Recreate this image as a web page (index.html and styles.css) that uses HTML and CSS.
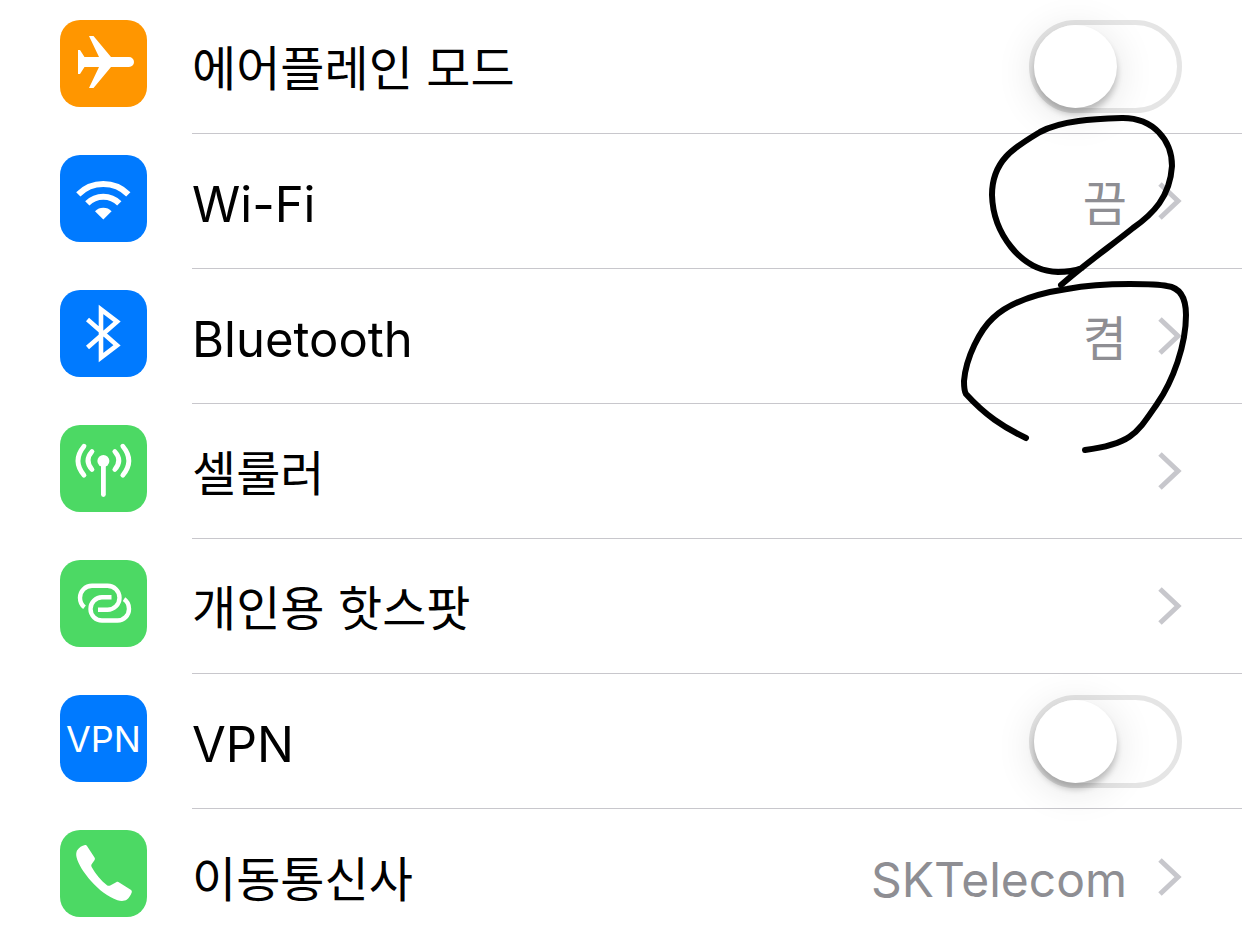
FILE: index.html
```html
<!DOCTYPE html>
<html lang="ko">
<head>
    <meta charset="UTF-8">
    <meta name="viewport" content="width=device-width, initial-scale=1.0">
    <title>설정</title>
    <link rel="stylesheet" href="styles.css">
</head>
<body>
    <main class="settings">
        <ul class="list">
            <li class="row">
                <svg class="icon orange" viewBox="0 0 87 87" aria-hidden="true">
                    <path fill="#fff" d="M18 30h2l4.500 7H39L29 16h4.500L51 37h18a5 5 0 0 1 0 10H51L33.500 68H29l10-21H24.500L20 54h-2z"/>
                </svg>
                <div class="content">
                    <label class="label" for="airplane">에어플레인 모드</label>
                    <input class="switch" type="checkbox" id="airplane">
                </div>
            </li>
            <li class="row">
                <svg class="icon blue" viewBox="0 0 87 87" aria-hidden="true">
                    <g fill="none" stroke="#fff" stroke-width="6">
                        <path d="M18.300 39.300a35.400 35.400 0 0 1 50 0"/>
                        <path d="M27.300 48.400a22.500 22.500 0 0 1 32 0"/>
                    </g>
                    <path fill="#fff" d="M43.300 64.500L35 56.200a11.700 11.700 0 0 1 16.600 0z"/>
                </svg>
                <a class="content" href="#wifi">
                    <span class="label latin">Wi-Fi</span>
                    <span class="value">끔</span>
                    <svg class="chevron" viewBox="0 0 24 38" aria-hidden="true"><path d="M2 2l18 17L2 36"/></svg>
                </a>
            </li>
            <li class="row">
                <svg class="icon blue" viewBox="0 0 87 87" aria-hidden="true">
                    <path fill="none" stroke="#fff" stroke-width="4.600" d="M27.500 29.500L57 55.300 41 67.500v-48l16 12.200-29.500 25.800"/>
                </svg>
                <a class="content" href="#bluetooth">
                    <span class="label latin">Bluetooth</span>
                    <span class="value">켬</span>
                    <svg class="chevron" viewBox="0 0 24 38" aria-hidden="true"><path d="M2 2l18 17L2 36"/></svg>
                </a>
            </li>
            <li class="row">
                <svg class="icon green" viewBox="0 0 87 87" aria-hidden="true">
                    <circle cx="43.400" cy="36" r="6" fill="#fff"/>
                    <g fill="none" stroke="#fff" stroke-width="4.800" stroke-linecap="round">
                        <path d="M43.400 36v33.500"/>
                        <path d="M32 26.500q-8 9 0 18M54.800 26.500q8 9 0 18"/>
                        <path d="M24 21.200q-12 14.500 0 29M62.800 21.200q12 14.500 0 29"/>
                    </g>
                </svg>
                <a class="content" href="#cellular">
                    <span class="label">셀룰러</span>
                    <svg class="chevron" viewBox="0 0 24 38" aria-hidden="true"><path d="M2 2l18 17L2 36"/></svg>
                </a>
            </li>
            <li class="row">
                <svg class="icon green" viewBox="0 0 87 87" aria-hidden="true">
                    <g fill="none" stroke="#fff" stroke-width="4.400">
                        <path d="M24.500 47.300C21.500 45 20 41.500 20 37.700a12 12 0 0 1 12-12h15.500a12 12 0 0 1 0 24H38"/>
                        <path d="M51.500 37.300H42.500a11.500 11.500 0 0 0-12 11.700 11.500 11.500 0 0 0 12 11.500h15a11.500 11.500 0 0 0 11.500-11.500c0-4-1.500-7.500-5-9.800"/>
                    </g>
                </svg>
                <a class="content" href="#hotspot">
                    <span class="label">개인용 핫스팟</span>
                    <svg class="chevron" viewBox="0 0 24 38" aria-hidden="true"><path d="M2 2l18 17L2 36"/></svg>
                </a>
            </li>
            <li class="row">
                <span class="icon blue vpn" aria-hidden="true">VPN</span>
                <div class="content">
                    <label class="label latin" for="vpn">VPN</label>
                    <input class="switch" type="checkbox" id="vpn">
                </div>
            </li>
            <li class="row">
                <svg class="icon green" viewBox="0 0 87 87" aria-hidden="true">
                    <path fill="#fff" d="M17 20.500c2-3 5-5 8-5.500 1 0 1.500.300 2 1l7.500 11.500c.700 1 .500 2-.200 3l-2.500 3.500c-.700 1-.700 2 0 3.200C35.500 44 41 50.500 47 55.200c1 .800 2 .800 3.200.200l6-3.200c1-.500 2-.500 3 .200l11.500 7.300c1 .700 1.400 1.600 1 2.800-1.200 3-2.700 5.500-4.700 7-2.500 1.700-6 1.800-9.500.700C48 67 39 60 31 51c-7-8-13-17-14.500-24-.500-2.500-.300-4.800.500-6.500z"/>
                </svg>
                <a class="content" href="#carrier">
                    <span class="label">이동통신사</span>
                    <span class="value">SKTelecom</span>
                    <svg class="chevron" viewBox="0 0 24 38" aria-hidden="true"><path d="M2 2l18 17L2 36"/></svg>
                </a>
            </li>
        </ul>

        <!-- 손글씨 표시 -->
        <svg class="marks" viewBox="942 100 300 360" aria-hidden="true">
            <path d="M1082 268C1074 271 1066 272 1058 272C1020 271 993 232 992 195C992 160 1015 147 1040 132C1062 120 1095 119 1123 118C1153 118 1172 140 1172 166C1170 197 1153 214 1133 228C1112 245 1085 264 1061 285"/>
            <path d="M1026 438C1003 427 985 415 966 394C964 391 964 386 964 381C966 357 980 330 993 318C1010 302 1040 293 1067 289C1088 285 1109 284 1130 284C1143 284 1158 284 1167 286C1183 288 1186 302 1186 315C1186 345 1173 381 1157 404C1137 433 1132 444 1085 450"/>
        </svg>
    </main>
</body>
</html>
```
FILE: styles.css
```css
body {
    margin: 0;
    background: #fff;
    color: #000;
    font-family: Inter, 'Noto Sans CJK KR', sans-serif;
    font-size: 48px;
    line-height: 72px;
}
.settings {
    position: relative;
}
.list {
    list-style: none;
    margin: 0;
    padding: 0;
}
.row {
    display: flex;
    align-items: flex-start;
    gap: 45px;
    min-height: 135px;
    padding-left: 60px;
}
.row:first-child {
    min-height: 134px;
}
.row:first-child .icon {
    margin-top: 20px;
}
.row:last-child {
    min-height: 128px;
}
.row:last-child .content {
    border-bottom: none;
    padding-top: 8px;
}
.icon {
    flex: none;
    width: 87px;
    height: 87px;
    margin-top: 21px;
    border-radius: 20px;
}
.orange {
    background: #ff9600;
}
.blue {
    background: #007aff;
}
.green {
    background: #4cd964;
}
.vpn {
    display: flex;
    align-items: center;
    justify-content: center;
    color: #fff;
    font-size: 36px;
    font-weight: 400;
}
.content {
    flex: 1;
    align-self: stretch;
    display: flex;
    align-items: center;
    padding-right: 60px;
    border-bottom: 1px solid #c8c7cc;
    color: inherit;
    text-decoration: none;
}
.label {
    flex: 1;
    padding-top: 5px;
}
.value {
    padding-top: 5px;
    color: #8e8e93;
}
.latin {
    padding-top: 7px;
    font-size: 49px;
}
.chevron {
    flex: none;
    width: 24px;
    height: 38px;
    margin-left: 31px;
    fill: none;
    stroke: #c7c7cc;
    stroke-width: 5px;
}
.switch {
    appearance: none;
    flex: none;
    box-sizing: border-box;
    width: 153px;
    height: 93px;
    margin: 0;
    border: 5px solid #e5e5e5;
    border-radius: 47px;
    cursor: pointer;
}
.switch::before {
    content: '';
    display: block;
    width: 83px;
    height: 83px;
    border-radius: 50%;
    background: #fff;
    box-shadow: 0 6px 6px rgba(0,0,0,0.22), 0 6px 40px rgba(0,0,0,0.12);
}
.switch:checked {
    background: #4cd964;
    border-color: #4cd964;
}
.switch:checked::before {
    margin-left: 60px;
}
.marks {
    position: absolute;
    top: 100px;
    right: 0;
    width: 300px;
    height: 360px;
    fill: none;
    stroke: #000;
    stroke-width: 6px;
    stroke-linecap: round;
    stroke-linejoin: round;
    pointer-events: none;
}
```
